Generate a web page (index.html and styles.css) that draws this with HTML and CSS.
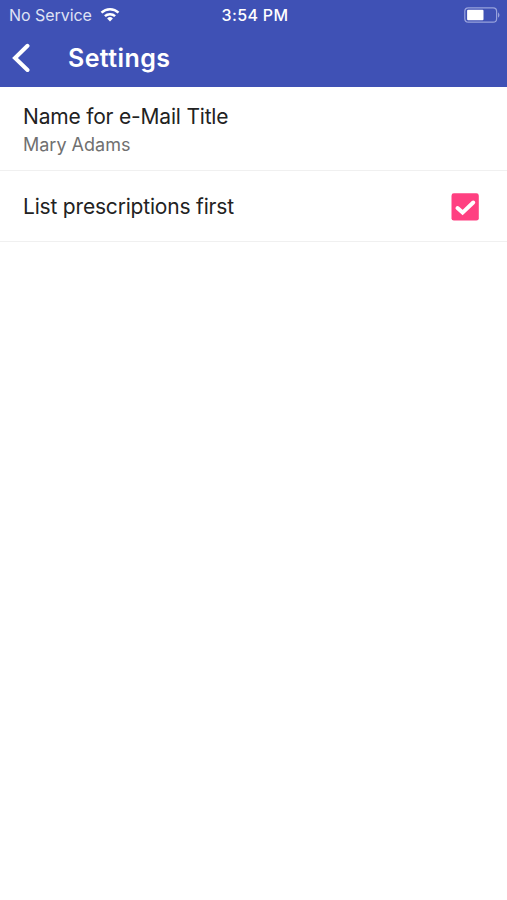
FILE: index.html
```html
<!DOCTYPE html>
<html lang="en">
<head>
<meta charset="utf-8">
<title>Settings</title>
<link rel="stylesheet" href="styles.css">
</head>
<body>
<header class="header">
  <div class="status">
    <div class="carrier"><span class="carrier-name">No Service</span>
      <svg class="wifi" viewBox="0 0 20 14" width="20" height="14"><path d="M10 13.400 7.100 10.500a4.200 4.200 0 0 1 5.800 0Z" fill="#fff"/><path d="M4.900 8.200a7.400 7.400 0 0 1 10.200 0M1.500 4.700a12.200 12.200 0 0 1 17 0" fill="none" stroke="#fff" stroke-width="2.500"/></svg>
    </div>
    <span class="time">3:54 PM</span>
    <svg class="battery" viewBox="0 0 36 16" width="36" height="16"><rect x=".8" y=".8" width="31.800" height="14.400" rx="3.500" fill="none" stroke="#98a2dc" stroke-width="1.200"/><rect x="3.100" y="2.800" width="16.400" height="10.400" rx="1" fill="#fff"/><path d="M34 5.200q3 2.800 0 5.600Z" fill="#98a2dc"/></svg>
  </div>
  <div class="nav">
    <svg class="back" viewBox="0 0 20 30" width="20" height="30"><path d="M16.500 2.800 4 15 16.500 27" fill="none" stroke="#fff" stroke-width="4" stroke-linecap="round"/></svg>
    <h1 class="title">Settings</h1>
  </div>
</header>
<main>
  <div class="row row-name">
    <div><div class="label">Name for e-Mail Title</div><div class="value">Mary Adams</div></div>
  </div>
  <div class="row row-check">
    <div class="label">List prescriptions first</div>
    <svg class="check" viewBox="0 0 28 28" width="28" height="28"><rect x=".5" y=".3" width="27.300" height="27.300" rx="2.400" fill="#ff4081"/><path d="m6.500 15 5.100 4.600L22.200 9.500" fill="none" stroke="#fff" stroke-width="4" stroke-linecap="round"/></svg>
  </div>
</main>
</body>
</html>
```
FILE: styles.css
```css
* { box-sizing: border-box; }
body { margin: 0; background: #fff; font-family: Inter, sans-serif; color: #222; }
.header { height: 87px; background: #3f51b5; color: #fff; }
.status { height: 30px; display: grid; grid-template-columns: 1fr auto 1fr; align-items: center; padding: 0 7px 0 10px; }
.carrier { display: flex; align-items: center; gap: 8px; margin-left: -1px; font-size: 16px; color: #dfe2f4; letter-spacing: -.05px; }
.time { font-size: 16px; font-weight: 500; letter-spacing: .35px; }
.battery { justify-self: end; }
.nav { height: 55px; display: flex; align-items: center; padding-left: 11px; }
.title { margin: 0 0 0 37px; font-size: 25px; font-weight: 600; letter-spacing: .4px; }
.row { display: flex; align-items: center; justify-content: space-between; padding: 0 28px 0 23px; border-bottom: 1px solid #f0f0f0; }
.row-name { height: 84px; padding-top: 5px; }
.row-check { height: 71px; padding-top: 2px; }
.label { font-size: 21px; line-height: 28px; letter-spacing: -.19px; white-space: nowrap; }
.value { font-size: 18px; line-height: 28px; color: #707070; }
```
